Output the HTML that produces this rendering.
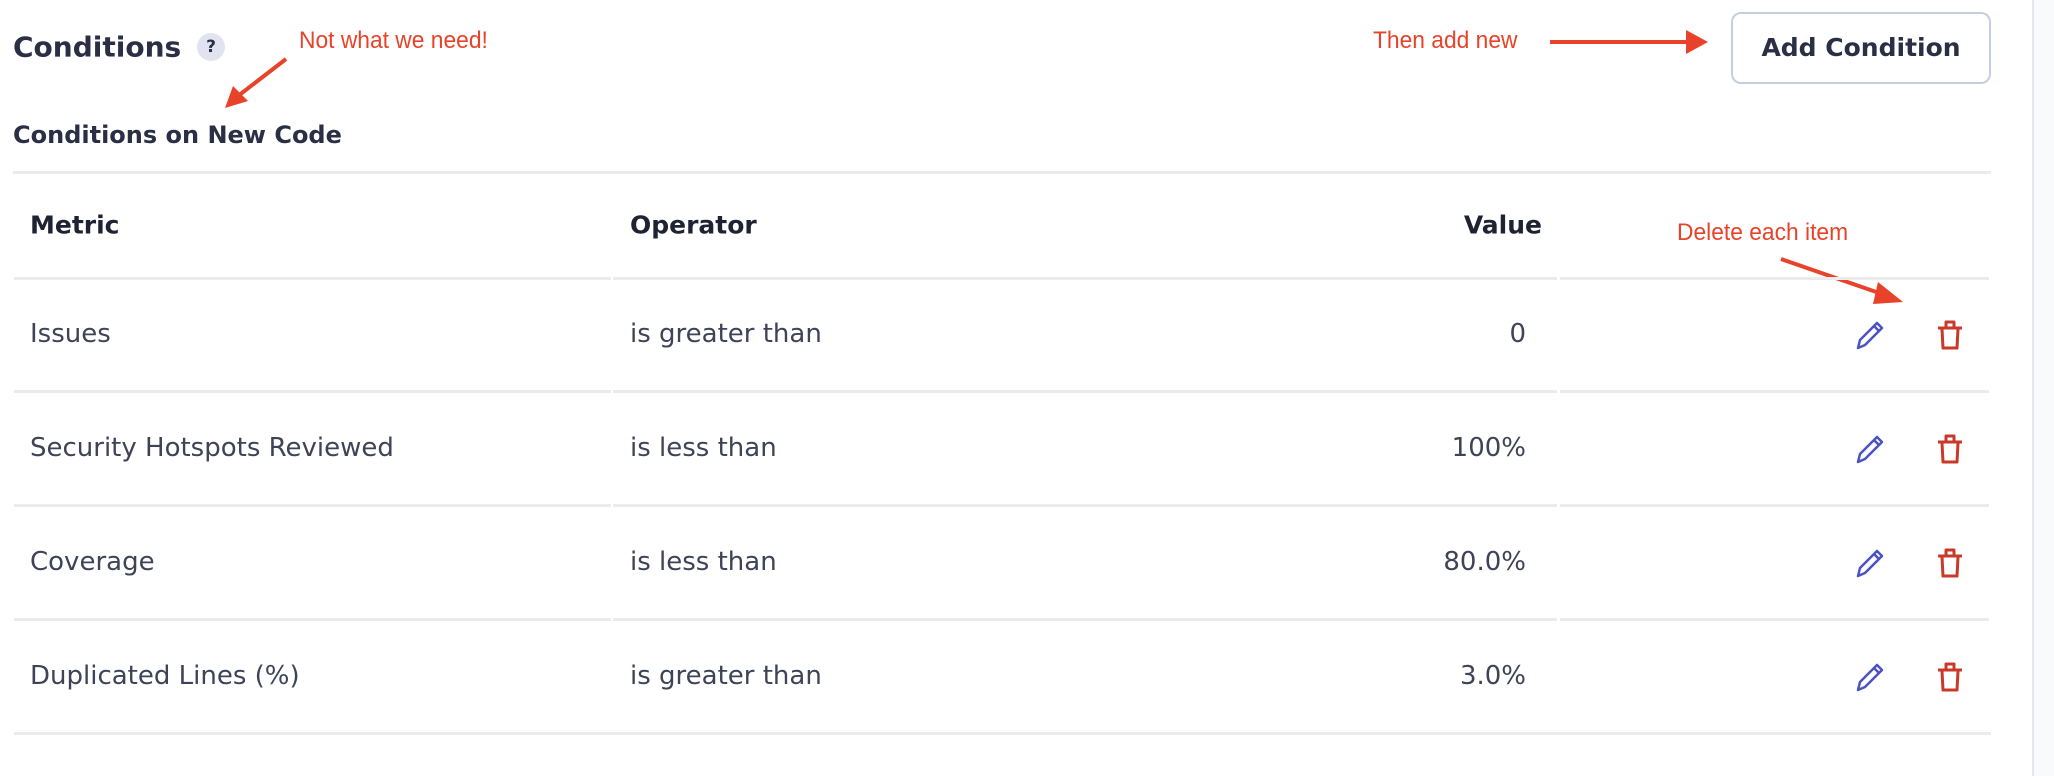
<!DOCTYPE html>
<html><head><style>
body{margin:0;width:2054px;height:776px;background:#fff;position:relative;overflow:hidden;font-family:"DejaVu Sans",sans-serif;color:#2a2f45}
.a{position:absolute;white-space:nowrap}
.t{font-size:26px;color:#3e4357;transform:translateY(-50%)}
.h{font-size:25px;font-weight:bold;color:#1f2233;transform:translateY(-50%)}
.r{font-family:"Liberation Sans",sans-serif;color:#e8432a;font-size:24px;transform:translateY(-50%) scaleX(.95);transform-origin:left center}
.line{position:absolute;height:3px;background:#ebebeb}
</style></head><body>
<div style="position:absolute;left:2032px;top:0;width:2px;height:776px;background:#e4e7ef"></div>
<div style="position:absolute;left:2034px;top:0;width:20px;height:776px;background:#f9fafc"></div>

<div class="a" style="left:13px;top:47px;font-size:28px;font-weight:bold;transform:translateY(-50%)">Conditions</div>
<div class="a" style="left:197px;top:33px;width:28px;height:28px;border-radius:50%;background:#e1e4f0;color:#2a2f45;font-weight:bold;font-size:17px;text-align:center;line-height:28px">?</div>
<div class="a r" style="left:299px;top:41px">Not what we need!</div>
<div class="a r" style="left:1373px;top:41px">Then add new</div>
<div class="a r" style="left:1677px;top:233px">Delete each item</div>

<svg class="a" style="left:0;top:0" width="2054" height="776">
<g stroke="#e8432a" stroke-width="4" fill="#e8432a">
<line x1="286" y1="59" x2="238" y2="96"/><polygon points="225,108 233,86 248,101" stroke="none"/>
<line x1="1550" y1="42" x2="1690" y2="42"/><polygon points="1708,42 1686,30 1686,54" stroke="none"/>
<line x1="1781" y1="259" x2="1882" y2="294"/><polygon points="1903,302 1878,282 1873,304" stroke="none"/>
</g>
</svg>

<div class="a" style="left:1731px;top:12px;width:256px;height:68px;border:2px solid #c5cde0;border-radius:10px;font-size:25px;font-weight:bold;text-align:center;line-height:68px;color:#2a2f45">Add Condition</div>

<div class="a" style="left:13px;top:135px;font-size:24px;font-weight:bold;transform:translateY(-50%)">Conditions on New Code</div>
<div class="line" style="left:13px;top:171px;width:1978px"></div>

<div class="a h" style="left:30px;top:225px">Metric</div>
<div class="a h" style="left:630px;top:225px">Operator</div>
<div class="a h" style="right:512px;top:225px">Value</div>

<div class="line" style="left:14px;top:277px;width:597px"></div><div class="line" style="left:613px;top:277px;width:944px"></div><div class="line" style="left:1560px;top:277px;width:429px"></div>
<div class="line" style="left:14px;top:390px;width:597px"></div><div class="line" style="left:613px;top:390px;width:944px"></div><div class="line" style="left:1560px;top:390px;width:429px"></div>
<div class="line" style="left:14px;top:504px;width:597px"></div><div class="line" style="left:613px;top:504px;width:944px"></div><div class="line" style="left:1560px;top:504px;width:429px"></div>
<div class="line" style="left:14px;top:618px;width:597px"></div><div class="line" style="left:613px;top:618px;width:944px"></div><div class="line" style="left:1560px;top:618px;width:429px"></div>
<div class="line" style="left:14px;top:732px;width:1977px"></div>

<div class="a t" style="left:30px;top:334px">Issues</div>
<div class="a t" style="left:630px;top:334px">is greater than</div>
<div class="a t" style="right:528px;top:334px">0</div>
<div class="a t" style="left:30px;top:448px">Security Hotspots Reviewed</div>
<div class="a t" style="left:630px;top:448px">is less than</div>
<div class="a t" style="right:528px;top:448px">100%</div>
<div class="a t" style="left:30px;top:562px">Coverage</div>
<div class="a t" style="left:630px;top:562px">is less than</div>
<div class="a t" style="right:528px;top:562px">80.0%</div>
<div class="a t" style="left:30px;top:676px">Duplicated Lines (%)</div>
<div class="a t" style="left:630px;top:676px">is greater than</div>
<div class="a t" style="right:528px;top:676px">3.0%</div>

<svg class="a" style="left:0;top:0" width="2054" height="776">
<defs>
<g id="pen" fill="none" stroke="#4a53c0" stroke-width="2.5" stroke-linejoin="round"><path d="M-12 13 L-10 5 L7 -12 L12 -7 L-5 10 Z M4 -9 L9 -4"/></g>
<g id="bin" fill="none" stroke="#c9392b" stroke-width="3" stroke-linejoin="round"><path d="M-12 -7 H12 M-4 -7 V-13 H4 V-7 M-8 -6 L-7 13 H7 L8 -6"/></g>
</defs>
<use href="#pen" x="1870" y="335"/><use href="#bin" x="1950" y="335"/>
<use href="#pen" x="1870" y="449"/><use href="#bin" x="1950" y="449"/>
<use href="#pen" x="1870" y="563"/><use href="#bin" x="1950" y="563"/>
<use href="#pen" x="1870" y="677"/><use href="#bin" x="1950" y="677"/>
</svg>
</body></html>
